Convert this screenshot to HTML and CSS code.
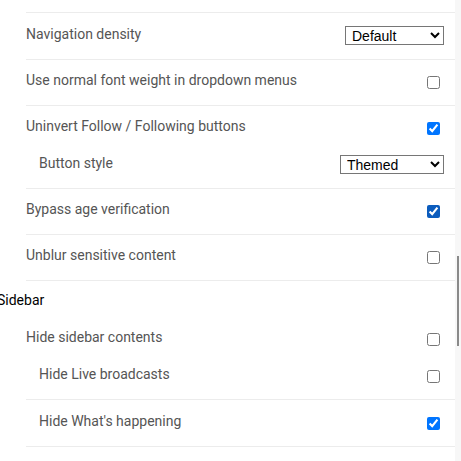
FILE: index.html
```html
<!DOCTYPE html>
<html>
<head>
<meta charset="utf-8">
<link rel="stylesheet" href="styles.css">
</head>
<body>
<div class="page">
  <main class="content">
    <div class="top-group"></div>
    <div class="group group-first">
      <div class="item">
        <span class="label">Navigation density</span>
        <select class="select select-density"><option>Default</option></select>
      </div>
    </div>
    <div class="group">
      <div class="item">
        <span class="label">Use normal font weight in dropdown menus</span>
        <input type="checkbox" class="check">
      </div>
    </div>
    <div class="group">
      <div class="item">
        <span class="label">Uninvert Follow / Following buttons</span>
        <input type="checkbox" class="check" checked>
      </div>
      <div class="item sub">
        <span class="label">Button style</span>
        <select class="select select-style"><option>Themed</option></select>
      </div>
    </div>
    <div class="group">
      <div class="item">
        <span class="label">Bypass age verification</span>
        <input type="checkbox" class="check check-hover" checked>
      </div>
    </div>
    <div class="group">
      <div class="item">
        <span class="label">Unblur sensitive content</span>
        <input type="checkbox" class="check">
      </div>
    </div>
    <h3 class="section-title">Sidebar</h3>
    <div class="group">
      <div class="item">
        <span class="label">Hide sidebar contents</span>
        <input type="checkbox" class="check">
      </div>
      <div class="item sub">
        <span class="label">Hide Live broadcasts</span>
        <input type="checkbox" class="check">
      </div>
    </div>
    <div class="group group-last">
      <div class="item sub">
        <span class="label">Hide What's happening</span>
        <input type="checkbox" class="check" checked>
      </div>
    </div>
  </main>
  <aside class="edge"><div class="thumb"></div></aside>
</div>
</body>
</html>
```
FILE: styles.css
```css
html, body {
  margin: 0;
  padding: 0;
  background: #ffffff;
}
body {
  font-family: Roboto, "Noto Sans", sans-serif;
  font-size: 14px;
  overflow: hidden;
}
.page {
  display: flex;
  width: 461px;
  height: 461px;
  overflow: hidden;
}
.content {
  width: 429px;
  padding-left: 26px;
  flex: none;
}
.top-group {
  height: 12px;
  border-bottom: 1px solid #ececec;
}
.group {
  padding: 3px 0 5px;
  border-bottom: 1px solid #ececec;
}
.group-first,
.group-last {
  padding-top: 4px;
}
.item {
  display: flex;
  align-items: center;
  justify-content: space-between;
  height: 37px;
  padding-right: 12px;
}
.item.sub {
  padding-left: 13px;
}
.label {
  color: #555555;
  line-height: 20px;
  padding-bottom: 3px;
}
.check {
  width: 13px;
  height: 13px;
  margin: 3px 3px 1px 4px;
}
.check-hover {
  accent-color: #0b5cbd;
}
.select {
  font-family: "Liberation Sans", Arial, sans-serif;
  font-size: 14px;
  color: #000;
  height: 19px;
  padding: 0 0 0 2px;
  border: 1px solid #767676;
  border-radius: 0;
  background: #fff;
  margin-right: -1px;
}
.select-density {
  width: 99px;
}
.select-style {
  width: 104px;
}
.section-title {
  margin: 0 0 0 -29px;
  height: 36px;
  line-height: 39px;
  font-size: 14px;
  font-weight: normal;
  color: #000;
}
.edge {
  flex: 1;
  background: #f7f7f7;
  display: flex;
  justify-content: center;
}
.thumb {
  width: 2px;
  height: 90px;
  margin-top: 256px;
  background: #8a8a8a;
}
```
